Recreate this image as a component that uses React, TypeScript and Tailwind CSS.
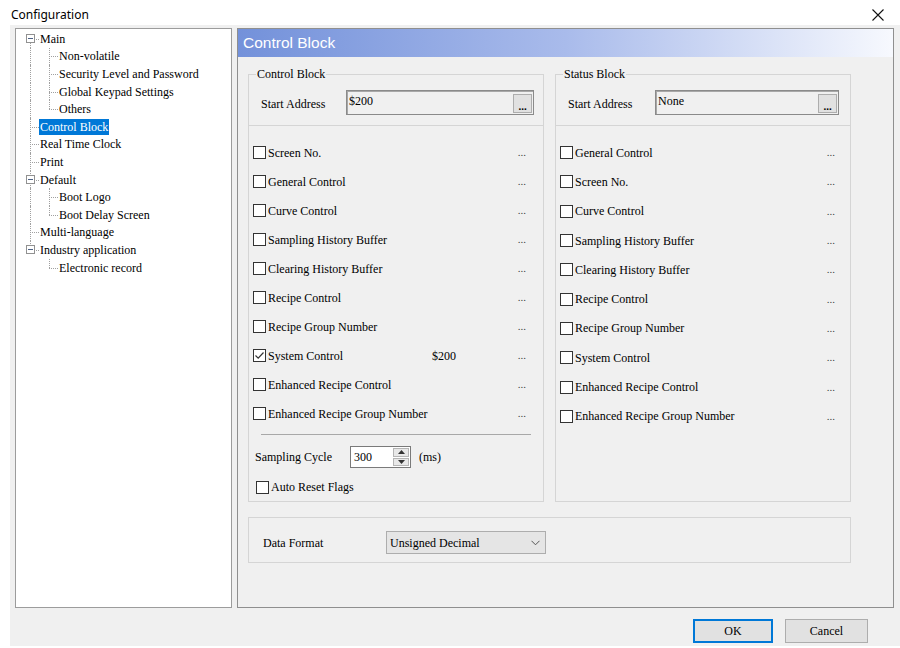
import React from "react";

type TreeItem = {
  label: string;
  level: 0 | 1;
  box?: boolean;
  first?: boolean;
  last?: boolean;
  lastChild?: boolean;
  noTrunk?: boolean;
  selected?: boolean;
};

const tree: TreeItem[] = [
  { label: "Main", level: 0, box: true, first: true },
  { label: "Non-volatile", level: 1 },
  { label: "Security Level and Password", level: 1 },
  { label: "Global Keypad Settings", level: 1 },
  { label: "Others", level: 1, lastChild: true },
  { label: "Control Block", level: 0, selected: true },
  { label: "Real Time Clock", level: 0 },
  { label: "Print", level: 0 },
  { label: "Default", level: 0, box: true },
  { label: "Boot Logo", level: 1 },
  { label: "Boot Delay Screen", level: 1, lastChild: true },
  { label: "Multi-language", level: 0 },
  { label: "Industry application", level: 0, box: true, last: true },
  { label: "Electronic record", level: 1, lastChild: true, noTrunk: true },
];

const leftRows = [
  { label: "Screen No." },
  { label: "General Control" },
  { label: "Curve Control" },
  { label: "Sampling History Buffer" },
  { label: "Clearing History Buffer" },
  { label: "Recipe Control" },
  { label: "Recipe Group Number" },
  { label: "System Control", checked: true, value: "$200" },
  { label: "Enhanced Recipe Control" },
  { label: "Enhanced Recipe Group Number" },
];

const rightRows = [
  "General Control",
  "Screen No.",
  "Curve Control",
  "Sampling History Buffer",
  "Clearing History Buffer",
  "Recipe Control",
  "Recipe Group Number",
  "System Control",
  "Enhanced Recipe Control",
  "Enhanced Recipe Group Number",
];

const dots = "border-dotted border-[#a0a0a0]";

function TreeRow({ item }: { item: TreeItem }) {
  return (
    <div className="relative flex h-[17.6px] items-center">
      {/* trunk */}
      {item.level === 0 && item.first && (
        <span className={`absolute left-[14px] top-1/2 h-1/2 border-l ${dots}`} />
      )}
      {item.level === 0 && item.last && (
        <span className={`absolute left-[14px] top-0 h-1/2 border-l ${dots}`} />
      )}
      {((item.level === 0 && !item.first && !item.last) || (item.level === 1 && !item.noTrunk)) && (
        <span className={`absolute left-[14px] top-0 h-full border-l ${dots}`} />
      )}
      {item.level === 0 && (
        <span className={`absolute left-[14px] top-1/2 w-[9px] border-t ${dots}`} />
      )}
      {item.level === 1 && (
        <>
          <span
            className={`absolute left-[33px] top-0 border-l ${dots} ${item.lastChild ? "h-1/2" : "h-full"}`}
          />
          <span className={`absolute left-[33px] top-1/2 w-[9px] border-t ${dots}`} />
        </>
      )}
      {item.box && (
        <span className="absolute left-[10px] top-[4px] flex h-[9px] w-[9px] items-center justify-center border border-[#919191] bg-white">
          <span className="h-px w-[5px] bg-[#4d6185]" />
        </span>
      )}
      <span
        className={`${item.level === 0 ? "ml-[23px]" : "ml-[42px]"} px-px leading-[16px] ${
          item.selected ? "bg-[#0078d7] text-white" : "text-black"
        }`}
      >
        {item.label}
      </span>
    </div>
  );
}

function Check({ checked }: { checked?: boolean }) {
  return (
    <span className="flex h-[13px] w-[13px] shrink-0 items-center justify-center border border-[#333333] bg-white">
      {checked && (
        <svg width="11" height="11" viewBox="0 0 11 11">
          <path d="M1.5 5.5 L4.2 8.2 L9.5 2.5" fill="none" stroke="#333333" strokeWidth="1.2" />
        </svg>
      )}
    </span>
  );
}

function Dots() {
  return <span className="text-[11px] leading-none text-[#444]">...</span>;
}

function AddressBox({ value, width }: { value: string; width: string }) {
  return (
    <div
      className={`flex h-[25px] ${width} items-start justify-between border border-[#8a8a8a] bg-[#f0f0f0] pl-[2px] pr-[1px] pt-[3px] shadow-[inset_1px_1px_0_#a8a8a8]`}
    >
      <span className="leading-[14px]">{value}</span>
      <span className="flex h-[19px] w-[19px] items-end justify-center border border-[#adadad] bg-[#e1e1e1] pb-[2px] text-[11px] font-bold leading-[8px]">
        ...
      </span>
    </div>
  );
}

function StartGroup({
  title,
  value,
  labelW,
  inputW,
}: {
  title: string;
  value: string;
  labelW: string;
  inputW: string;
}) {
  return (
    <fieldset className="m-0 border-x border-t border-b border-[#d5d5d5] p-0">
      <legend className="ml-[7px] px-px leading-[14px]">{title}</legend>
      <div className="flex items-center pb-[10px] pl-[12px] pt-[9px]">
        <span className={`${labelW} pt-[2px]`}>Start Address</span>
        <AddressBox value={value} width={inputW} />
      </div>
    </fieldset>
  );
}

export default function App() {
  return (
    <div
      className="relative h-[648px] w-[900px] overflow-hidden bg-white text-[12px] text-black"
      style={{ fontFamily: '"Liberation Serif", "Times New Roman", serif' }}
    >
      {/* title bar */}
      <div className="flex h-[25px] items-start justify-between pl-[11px] pr-[16px] pt-[7px]">
        <span
          className="text-[12px] leading-[16px] text-black"
          style={{ fontFamily: '"Noto Sans", "Open Sans", sans-serif' }}
        >
          Configuration
        </span>
        <svg width="12" height="12" viewBox="0 0 12 12" className="mt-[2px]">
          <path d="M0.5 0.5 L11.5 11.5 M11.5 0.5 L0.5 11.5" stroke="#111" strokeWidth="1.1" />
        </svg>
      </div>

      {/* body */}
      <div className="ml-[10px] h-[621px] bg-[#f0f0f0] pl-[5px] pt-[3px]">
        <div className="flex gap-[5px]">
          {/* tree */}
          <div className="h-[580px] w-[217px] border border-[#9c9c9c] bg-white pt-px">
            {tree.map((t) => (
              <TreeRow key={t.label} item={t} />
            ))}
          </div>

          {/* settings panel */}
          <div className="h-[580px] w-[657px] border border-[#8f8f8f] bg-[#f0f0f0]">
            <div className="flex h-[28px] items-center bg-[linear-gradient(to_right,#7391da,#a9bbeb_50%,#f7f9fe)] pl-[5px]">
              <span
                className="text-[15.5px] text-white"
                style={{ fontFamily: '"Liberation Sans", Arial, sans-serif' }}
              >
                Control Block
              </span>
            </div>

            <div className="pl-[10px] pt-[10px]">
              <div className="flex gap-[11px]">
                {/* control block column */}
                <div className="flex w-[296px] flex-col">
                  <StartGroup title="Control Block" value="$200" labelW="w-[85px]" inputW="w-[188px]" />
                  <div className="flex h-[376px] flex-col border-x border-b border-[#d5d5d5] pt-[12px]">
                    {leftRows.map((r) => (
                      <div key={r.label} className="flex h-[29px] items-center pl-[4px] pr-[17px]">
                        <Check checked={r.checked} />
                        <span className="ml-[2px] w-[164px]">{r.label}</span>
                        <span className="flex-1">{r.value}</span>
                        <Dots />
                      </div>
                    ))}
                    <div className="mx-[12px] mt-[6px] border-t border-[#a8a8a8]" />
                    <div className="mt-[11px] flex h-[22px] items-center pl-[6px]">
                      <span className="w-[95px]">Sampling Cycle</span>
                      <div className="flex h-[22px] w-[61px] items-center justify-between border border-[#7a7a7a] bg-white pl-[3px]">
                        <span>300</span>
                        <div className="flex h-full w-[18px] flex-col gap-px p-px">
                          <span className="flex flex-1 items-center justify-center border border-[#b5b5b5] bg-[#e8e8e8]">
                            <svg width="7" height="4" viewBox="0 0 7 4">
                              <path d="M0 4 L3.5 0 L7 4 Z" fill="#333" />
                            </svg>
                          </span>
                          <span className="flex flex-1 items-center justify-center border border-[#b5b5b5] bg-[#e8e8e8]">
                            <svg width="7" height="4" viewBox="0 0 7 4">
                              <path d="M0 0 L3.5 4 L7 0 Z" fill="#333" />
                            </svg>
                          </span>
                        </div>
                      </div>
                      <span className="ml-[8px]">(ms)</span>
                    </div>
                    <div className="mt-[10px] flex items-center pl-[7px]">
                      <Check />
                      <span className="ml-[2px]">Auto Reset Flags</span>
                    </div>
                  </div>
                </div>

                {/* status block column */}
                <div className="flex w-[296px] flex-col">
                  <StartGroup title="Status Block" value="None" labelW="w-[87px]" inputW="w-[184px]" />
                  <div className="flex h-[376px] flex-col border-x border-b border-[#d5d5d5] pt-[12px]">
                    {rightRows.map((r) => (
                      <div key={r} className="flex h-[29.3px] items-center pl-[4px] pr-[15px]">
                        <Check />
                        <span className="ml-[2px] flex-1">{r}</span>
                        <Dots />
                      </div>
                    ))}
                  </div>
                </div>
              </div>

              {/* data format */}
              <div className="mt-[15px] flex w-[603px] items-center border border-[#d5d5d5] pb-[8px] pl-[14px] pt-[13px]">
                <span className="w-[123px]">Data Format</span>
                <div className="flex h-[23px] w-[160px] items-center justify-between border border-[#adadad] bg-[#e5e5e5] pl-[3px] pr-[5px]">
                  <span>Unsigned Decimal</span>
                  <svg width="9" height="6" viewBox="0 0 9 6">
                    <path d="M0.5 0.8 L4.5 4.8 L8.5 0.8" fill="none" stroke="#555" strokeWidth="1" />
                  </svg>
                </div>
              </div>
            </div>
          </div>
        </div>

        {/* buttons */}
        <div className="mt-[11px] flex justify-end gap-[12px] pr-[32px]">
          <button className="h-[24px] w-[80px] border border-[#0078d7] bg-[#e1e1e1] shadow-[inset_0_0_0_1px_#0078d7]">
            OK
          </button>
          <button className="h-[24px] w-[83px] border border-[#adadad] bg-[#e1e1e1]">Cancel</button>
        </div>
      </div>
    </div>
  );
}
